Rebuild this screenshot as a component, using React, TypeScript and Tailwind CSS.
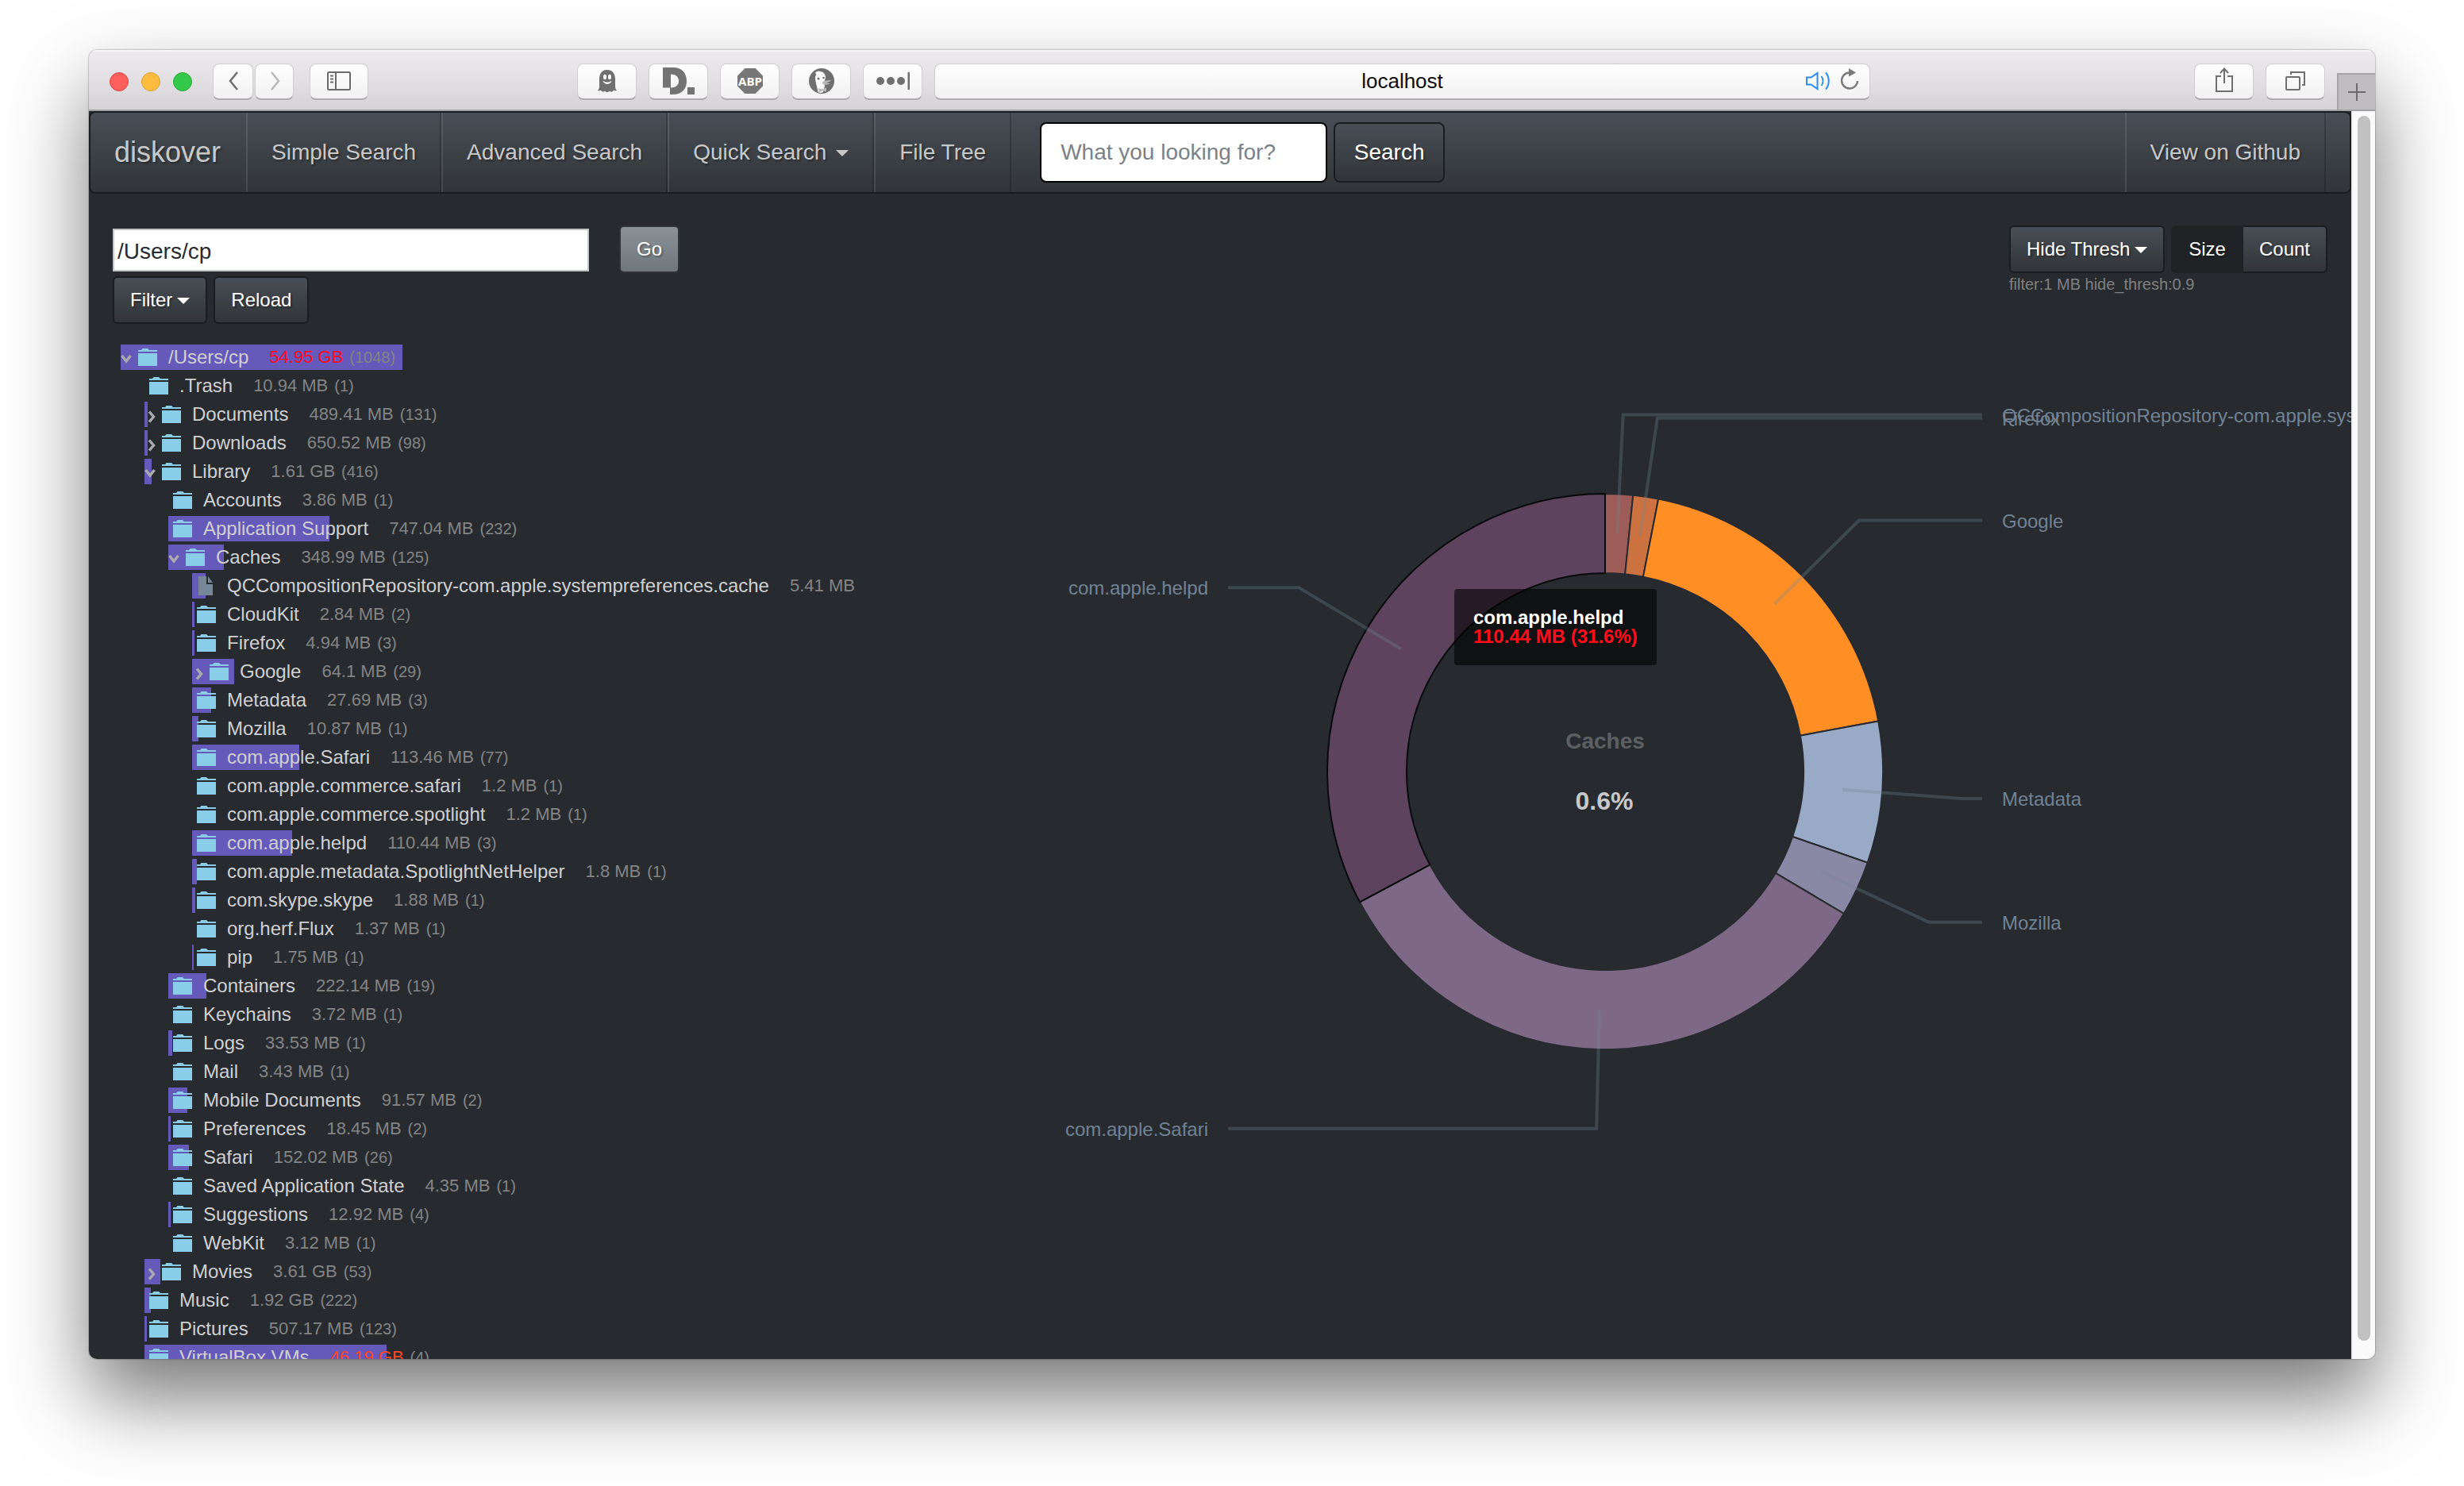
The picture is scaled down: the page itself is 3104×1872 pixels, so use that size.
import React from "react";

type Node = {
  name: string;
  size: string;
  count?: string;
  bar: number;
  tone?: "red" | "orange";
  file?: boolean;
  caret?: "open" | "closed";
  children?: Node[];
};

const tree: Node[] = [
  {
    name: "/Users/cp", size: "54.95 GB", count: "(1048)", bar: 355, tone: "red", caret: "open",
    children: [
      { name: ".Trash", size: "10.94 MB", count: "(1)", bar: 0 },
      { name: "Documents", size: "489.41 MB", count: "(131)", bar: 4, caret: "closed" },
      { name: "Downloads", size: "650.52 MB", count: "(98)", bar: 4, caret: "closed" },
      {
        name: "Library", size: "1.61 GB", count: "(416)", bar: 9, caret: "open",
        children: [
          { name: "Accounts", size: "3.86 MB", count: "(1)", bar: 0 },
          { name: "Application Support", size: "747.04 MB", count: "(232)", bar: 203 },
          {
            name: "Caches", size: "348.99 MB", count: "(125)", bar: 70, caret: "open",
            children: [
              { name: "QCCompositionRepository-com.apple.systempreferences.cache", size: "5.41 MB", bar: 17, file: true },
              { name: "CloudKit", size: "2.84 MB", count: "(2)", bar: 3 },
              { name: "Firefox", size: "4.94 MB", count: "(3)", bar: 3 },
              { name: "Google", size: "64.1 MB", count: "(29)", bar: 53, caret: "closed" },
              { name: "Metadata", size: "27.69 MB", count: "(3)", bar: 24 },
              { name: "Mozilla", size: "10.87 MB", count: "(1)", bar: 8 },
              { name: "com.apple.Safari", size: "113.46 MB", count: "(77)", bar: 135 },
              { name: "com.apple.commerce.safari", size: "1.2 MB", count: "(1)", bar: 0 },
              { name: "com.apple.commerce.spotlight", size: "1.2 MB", count: "(1)", bar: 0 },
              { name: "com.apple.helpd", size: "110.44 MB", count: "(3)", bar: 126 },
              { name: "com.apple.metadata.SpotlightNetHelper", size: "1.8 MB", count: "(1)", bar: 6 },
              { name: "com.skype.skype", size: "1.88 MB", count: "(1)", bar: 4 },
              { name: "org.herf.Flux", size: "1.37 MB", count: "(1)", bar: 0 },
              { name: "pip", size: "1.75 MB", count: "(1)", bar: 2 },
            ],
          },
          { name: "Containers", size: "222.14 MB", count: "(19)", bar: 48 },
          { name: "Keychains", size: "3.72 MB", count: "(1)", bar: 0 },
          { name: "Logs", size: "33.53 MB", count: "(1)", bar: 5 },
          { name: "Mail", size: "3.43 MB", count: "(1)", bar: 0 },
          { name: "Mobile Documents", size: "91.57 MB", count: "(2)", bar: 24 },
          { name: "Preferences", size: "18.45 MB", count: "(2)", bar: 3 },
          { name: "Safari", size: "152.02 MB", count: "(26)", bar: 26 },
          { name: "Saved Application State", size: "4.35 MB", count: "(1)", bar: 0 },
          { name: "Suggestions", size: "12.92 MB", count: "(4)", bar: 3 },
          { name: "WebKit", size: "3.12 MB", count: "(1)", bar: 0 },
        ],
      },
      { name: "Movies", size: "3.61 GB", count: "(53)", bar: 20, caret: "closed" },
      { name: "Music", size: "1.92 GB", count: "(222)", bar: 8 },
      { name: "Pictures", size: "507.17 MB", count: "(123)", bar: 3 },
      { name: "VirtualBox VMs", size: "46.19 GB", count: "(4)", bar: 305, tone: "orange" },
    ],
  },
];

function FolderIcon() {
  return (
    <svg className="h-[22px] w-6 shrink-0" viewBox="0 0 24 22" fill="#8acde9" aria-hidden="true">
      <path d="M4 2 5.500 0h6.500L14 2h10v2H0V2zM0 6h24v16H0z" />
    </svg>
  );
}

function FileIcon() {
  return (
    <svg className="ml-0.5 mr-1 h-6 w-[18px] shrink-0" viewBox="0 0 18 24" fill="#778899" aria-hidden="true">
      <path d="M0 0h10v10h8v14H0zM12 0l6 8h-6z" />
    </svg>
  );
}

function TreeCaret({ open }: { open: boolean }) {
  return (
    <svg className={open ? "mt-1 h-3 w-3.5" : "ml-1 mt-1.5 h-4 w-2.5"} viewBox={open ? "0 0 14 12" : "0 0 10 16"} fill="none" stroke="#ababab" strokeWidth="3.400" aria-hidden="true">
      <path d={open ? "M1.500 2 7 9l5.500-7" : "M2 1.500 7.500 8 2 14.500"} />
    </svg>
  );
}

function Tree({ nodes }: { nodes: Node[] }) {
  return (
    <ul>
      {nodes.map((n) => (
        <li key={n.name}>
          <div className="relative mb-1 flex h-8 items-center whitespace-nowrap">
            <span className="absolute inset-y-0 left-0 bg-[#6559b9]" style={{ width: n.bar }} />
            <div className="relative flex items-center">
              {n.caret ? (
                <button type="button" aria-label={(n.caret === "open" ? "Collapse " : "Expand ") + n.name} className="flex h-8 w-[22px] items-center">
                  <TreeCaret open={n.caret === "open"} />
                </button>
              ) : (
                <span className="w-1.5" />
              )}
              {n.file ? <FileIcon /> : <FolderIcon />}
              <span className="ml-3.5 text-2xl leading-8 text-[#d0d0d0]">{n.name}</span>
              <span className={"ml-[26px] text-[22px] leading-8 " + (n.tone === "red" ? "text-[#ff0a1e]" : n.tone === "orange" ? "text-[#ff4520]" : "text-[#848484]")}>
                {n.size}
              </span>
              {n.count && <span className="ml-2 text-[20px] leading-8 text-[#848484]">{n.count}</span>}
            </div>
          </div>
          {n.children && (
            <div className="ml-[30px]">
              <Tree nodes={n.children} />
            </div>
          )}
        </li>
      ))}
    </ul>
  );
}

const slices = [
  { label: "QCCompositionRepository-com.apple.systempreferences.cache", value: 5.41, color: "#9d5c57" },
  { label: "Firefox", value: 4.94, color: "#cc7240" },
  { label: "Google", value: 64.1, color: "#ff8e25" },
  { label: "Metadata", value: 27.69, color: "#98aac5" },
  { label: "Mozilla", value: 10.87, color: "#8a89a5" },
  { label: "com.apple.Safari", value: 113.46, color: "#7d6986" },
  { label: "com.apple.helpd", value: 110.44, color: "#5d435d" },
];

const point = (angle: number, r: number): [number, number] => [Math.sin(angle) * r, -Math.cos(angle) * r];

function arcs() {
  const total = slices.reduce((sum, s) => sum + s.value, 0);
  let start = 0;
  return slices.map((s) => {
    const end = start + (s.value / total) * Math.PI * 2;
    const mid = (start + end) / 2;
    const large = end - start > Math.PI ? 1 : 0;
    const d =
      "M" + point(start, 350) + "A350 350 0 " + large + " 1 " + point(end, 350) +
      "L" + point(end, 250) + "A250 250 0 " + large + " 0 " + point(start, 250) + "Z";
    start = end;
    const side = mid < Math.PI ? 1 : -1;
    const elbow = point(mid, 450);
    return { ...s, d, side, y: elbow[1], line: [point(mid, 300), elbow, [475 * side, elbow[1]]].join(" ") };
  });
}

function Donut() {
  const parts = arcs();
  return (
    <svg className="block w-full" viewBox="-940 -572 1880 1144" role="img" aria-label="Size by folder in Caches">
      {parts.map((p, i) => (
        <path key={p.label} d={p.d} fill={p.color} stroke={i === parts.length - 1 ? "#08090a" : "#272b30"} strokeWidth="2" />
      ))}
      {parts.map((p) => (
        <polyline key={p.label} points={p.line} fill="none" stroke="#6f8896" strokeOpacity="0.3" strokeWidth="4" />
      ))}
      {parts.map((p) => (
        <text key={p.label} x={500 * p.side} y={p.y + 9} textAnchor={p.side > 0 ? "start" : "end"} fontSize="24" fill="#728293">
          {p.label}
        </text>
      ))}
      <text x="0" y="-29" textAnchor="middle" fontSize="28" fontWeight="700" fill="#5d6062">Caches</text>
      <text x="-1" y="48" textAnchor="middle" fontSize="32" fontWeight="700" fill="#c8c8c8">0.6%</text>
    </svg>
  );
}

function Caret() {
  return (
    <svg className="mt-0.5 h-2 w-4" viewBox="0 0 16 8" fill="currentColor" aria-hidden="true">
      <path d="M0 0h16L8 8z" />
    </svg>
  );
}

const dark = "bg-[linear-gradient(#484e55,#3a3f44_60%,#313539)]";
const shade = "[text-shadow:2px_2px_2px_rgba(0,0,0,0.3)]";
const btn = "flex h-[60px] items-center gap-1.5 border-2 border-[#1a1d20] px-5 text-2xl text-white " + shade + " " + dark;
const chip = "flex h-[46px] items-center justify-center rounded-[8px] border border-[#cfcdcf] border-b-2 border-b-[#adabad] bg-[linear-gradient(#ffffff,#f1f1f1)]";
const navLink = "flex h-full items-center gap-3 border-l-2 border-r-2 border-l-white/10 border-r-black/20 px-[30px]";

function Toolbar() {
  return (
    <header className="flex h-[77px] shrink-0 items-center border-b-2 border-[#a09fa1] bg-[linear-gradient(#edebed,#e7e5e8_30%,#d5d3d6)] pl-[26px] pt-1 shadow-[inset_0_2px_0_#f7f6f7]">
      <div className="flex gap-4">
        <button type="button" aria-label="Close" className="size-6 rounded-full border border-[#e2463f] bg-[#fc605c]" />
        <button type="button" aria-label="Minimize" className="size-6 rounded-full border border-[#e0a030] bg-[#fdbc40]" />
        <button type="button" aria-label="Zoom" className="size-6 rounded-full border border-[#2aab37] bg-[#34c84a]" />
      </div>
      <div className="ml-[26px] flex gap-0.5">
        <button type="button" aria-label="Back" className={chip + " w-[51px]"}>
          <svg className="h-6 w-4" viewBox="0 0 16 24" fill="none" stroke="#6f6f6f" strokeWidth="2.500"><path d="M13 1 4 12l9 11" /></svg>
        </button>
        <button type="button" aria-label="Forward" className={chip + " w-[49px]"}>
          <svg className="h-6 w-4" viewBox="0 0 16 24" fill="none" stroke="#b8b8b8" strokeWidth="2.500"><path d="m4 1 9 11-9 11" /></svg>
        </button>
      </div>
      <button type="button" aria-label="Show sidebar" className={chip + " ml-5 w-[74px]"}>
        <svg className="h-6 w-[30px]" viewBox="0 0 30 24" fill="none" stroke="#6b6b6b" strokeWidth="2">
          <rect x="1" y="1" width="28" height="22" rx="1.500" />
          <path d="M11 1v22M4 5.500h4M4 9.500h4M4 13.500h4" />
        </svg>
      </button>
      <div className="ml-[263px] flex gap-[15px]">
        <button type="button" aria-label="Ghostery" className={chip + " w-[75px]"}>
          <svg className="h-7 w-6" viewBox="0 0 24 28">
            <path fill="#6f6f6f" d="M2 12C2 4 6 0 12 0s10 4 10 12v9c0 2 .8 3.600 2 5-1.500.6-3 .4-4-.6-1 2.300-3.200 3-5 1-1.600 2-4.400 2-6 0-1.800 2-4 1.300-5-1-1 1-2.500 1.200-4 .6 1.200-1.400 2-3 2-5z" />
            <ellipse cx="9" cy="9" rx="2" ry="3.200" fill="#fbfbfb" /><ellipse cx="15" cy="9" rx="2" ry="3.200" fill="#fbfbfb" />
            <path d="M7 14.500c2.500 4 7.500 4 10 0-3 2-7 2-10 0z" fill="#fbfbfb" stroke="#fbfbfb" />
          </svg>
        </button>
        <button type="button" aria-label="Disconnect" className={chip + " w-[75px]"}>
          <svg className="h-[34px] w-10" viewBox="0 0 40 34" fill="#737373">
            <path fillRule="evenodd" d="M0 0h13c11 0 17 7 17 17s-6 17-17 17H9v-8.500H0zM10 8.500v17c6 0 10-3 10-8.500s-4-8.500-10-8.500z" />
            <path d="M31 25h9v9h-9z" />
          </svg>
        </button>
        <button type="button" aria-label="Adblock Plus" className={chip + " w-[75px]"}>
          <svg className="size-8" viewBox="0 0 32 32">
            <path fill="#777777" d="M9.400 0h13.200L32 9.400v13.200L22.600 32H9.400L0 22.600V9.400z" />
            <text x="16" y="21.500" textAnchor="middle" fontSize="15" fontWeight="700" fill="#ffffff" fontFamily="Open Sans, sans-serif">ABP</text>
          </svg>
        </button>
        <button type="button" aria-label="DuckDuckGo" className={chip + " w-[75px]"}>
          <svg className="size-8" viewBox="0 0 32 32">
            <circle cx="16" cy="16" r="16" fill="#6f6f6f" />
            <path fill="#fbfbfb" d="M8 6c1-2 4-3 6-2 4 0 7 3 7 8l-2 6 1 4-2 8c-2 1.300-5 1-6.500 0C10.500 24 8 17 8 12c0-2 .5-3 1.500-4z" />
            <circle cx="12" cy="13" r="1.500" fill="#6f6f6f" /><circle cx="18.500" cy="12" r="1.300" fill="#6f6f6f" />
            <path fill="#b9b9b9" d="M17 17c3-1.500 7-2 11-1.500-2 2-5 2.500-7 2.500 2 1 4 1.200 6 .8-3 2.400-7 2.600-9.500 1.200zM12 25l4 1.500 6-2v5l-5-1-4.500 1.500z" />
          </svg>
        </button>
        <button type="button" aria-label="Passwords" className={chip + " w-[75px]"}>
          <svg className="h-[22px] w-[42px]" viewBox="0 0 42 22" fill="#6f6f6f">
            <circle cx="5" cy="11" r="5" /><circle cx="18" cy="11" r="5" /><circle cx="31" cy="11" r="5" /><path d="M39.500 0H42v22h-2.500z" />
          </svg>
        </button>
      </div>
      <div className={chip + " ml-[15px] flex-1"}>
        <input aria-label="Address" defaultValue="localhost" className="ml-[80px] h-10 min-w-0 flex-1 bg-transparent text-center text-[26px] text-[#0a0a0a] outline-none" />
        <div className="flex w-[80px] items-center gap-3">
          <svg className="h-6 w-[31px]" viewBox="0 0 31 24" fill="none" stroke="#2a8cf5" strokeWidth="2">
            <path d="M1 7.500h5.500L14.500 2v20L6.500 16.500H1zM19.500 6c2.500 3.500 2.500 8.500 0 12M25 1.500c5 6 5 15 0 21" />
          </svg>
          <svg className="-mt-1 h-7 w-6" viewBox="0 0 24 28">
            <path d="M12 5.500A10 10 0 1 0 22 16" fill="none" stroke="#7a7a7a" strokeWidth="2.400" />
            <path d="M11 0l9 5.500-9 5z" fill="#7a7a7a" />
          </svg>
        </div>
      </div>
      <div className="ml-[408px] flex gap-[15px]">
        <button type="button" aria-label="Share" className={chip + " w-[75px]"}>
          <svg className="-mt-1 h-[31px] w-[22px]" viewBox="0 0 22 31" fill="none" stroke="#6f6f6f" strokeWidth="2">
            <path d="M7 11H1v19h20V11h-6M11 20V1.500M6 7l5-5.500L16 7" />
          </svg>
        </button>
        <button type="button" aria-label="Show all tabs" className={chip + " w-[75px]"}>
          <svg className="h-6 w-[25px]" viewBox="0 0 25 24" fill="none" stroke="#6f6f6f" strokeWidth="2">
            <rect x="1" y="7" width="17" height="16" rx="1" /><path d="M7 4V1h17v16h-3" />
          </svg>
        </button>
      </div>
      <button type="button" aria-label="New tab" className="ml-[15px] flex h-[46px] w-12 items-center justify-center self-end border-l-2 border-t-2 border-[#a5a3a6] bg-[#bfbdc0]">
        <svg className="size-[22px]" viewBox="0 0 22 22" stroke="#6a6a6a" strokeWidth="2"><path d="M11 0v22M0 11h22" /></svg>
      </button>
    </header>
  );
}

function Navbar() {
  return (
    <nav className={"flex h-[104px] shrink-0 items-center rounded-[8px] border-2 border-[#1a1d20] text-[28px] text-[#c8c8c8] " + shade + " " + dark}>
      <a href="#home" className="w-[196px] pl-[30px] text-4xl">diskover</a>
      <a href="#simple" className={navLink}>Simple Search</a>
      <a href="#advanced" className={navLink}>Advanced Search</a>
      <a href="#quick" className={navLink}>Quick Search <Caret /></a>
      <a href="#tree" className={navLink}>File Tree</a>
      <form className="ml-9 flex gap-2" onSubmit={(e) => e.preventDefault()}>
        <input aria-label="Search" placeholder="What you looking for?" className="h-[76px] w-[362px] rounded-[8px] border-2 border-black bg-white px-6 text-[28px] text-[#272b30] outline-none placeholder:text-[#7a8288]" />
        <button type="submit" className={"h-[76px] w-[140px] rounded-[8px] border-2 border-[#1a1d20] text-[28px] text-white " + shade + " " + dark}>Search</button>
      </form>
      <a href="#github" className={navLink + " ml-auto mr-[30px]"}>View on Github</a>
    </nav>
  );
}

export default function App() {
  return (
    <div className="flex h-screen flex-col bg-white px-28 pb-40 pt-[63px] font-['Liberation_Sans',Arial,sans-serif]">
      <div className="flex min-h-0 flex-1 flex-col overflow-hidden rounded-[10px] shadow-[0_0_2px_rgba(0,0,0,0.6),0_50px_100px_rgba(0,0,0,0.53)]">
        <Toolbar />
        <div className="flex min-h-0 flex-1">
          <div className="flex min-w-0 flex-1 flex-col overflow-hidden bg-[#272b30]">
            <Navbar />
            <main className="flex min-h-0 flex-1">
              <section className="w-[970px] shrink-0 pl-[30px] pt-10">
                <form className="flex items-center gap-[38px]" onSubmit={(e) => e.preventDefault()}>
                  <input aria-label="Path" defaultValue="/Users/cp" className="mt-0.5 h-[54px] w-[600px] border-2 border-[#c4c4c4] bg-white px-1 pt-1 text-[28px] text-[#272b30] outline-none" />
                  <button type="submit" className={"h-[60px] w-[76px] rounded-[6px] border-2 border-[#303438] bg-[linear-gradient(#8a9196,#7a8288_60%,#6f777c)] text-2xl text-white " + shade}>Go</button>
                </form>
                <div className="mt-1 flex gap-2">
                  <button type="button" className={btn + " rounded-[6px]"}>Filter <Caret /></button>
                  <button type="button" className={btn + " rounded-[6px]"}>Reload</button>
                </div>
                <div className="ml-2.5 mt-[26px]">
                  <Tree nodes={tree} />
                </div>
              </section>
              <section className="min-w-0 flex-1 pt-10">
                <div className="mr-[30px] flex flex-col items-end">
                  <div>
                    <div className="flex gap-2">
                      <button type="button" className={btn + " rounded-[6px]"}>Hide Thresh <Caret /></button>
                      <div className="flex">
                        <button type="button" aria-pressed="true" className={"h-[60px] rounded-l-[6px] border-2 border-[#1f2225] bg-[#202326] px-5 text-2xl text-white " + shade}>Size</button>
                        <button type="button" className={btn + " rounded-r-[6px] border-l-0"}>Count</button>
                      </div>
                    </div>
                    <p className="text-[20px] leading-7 text-[#808080]">filter:1 MB hide_thresh:0.9</p>
                  </div>
                </div>
                <div className="relative mt-7">
                  <Donut />
                  <div className="absolute left-[calc(50%-190px)] top-[342px] h-24 whitespace-nowrap rounded-[4px] bg-black/60 p-6 text-2xl font-bold leading-6">
                    <p className="text-white">com.apple.helpd</p>
                    <p className="text-[#ff0d1c]">110.44 MB (31.6%)</p>
                  </div>
                </div>
              </section>
            </main>
          </div>
          <div className="flex w-[30px] border-l-2 border-[#ececec] bg-[#fafafa] pb-[23px] pl-1.5 pt-1.5">
            <div className="w-4 rounded-full bg-[#c1c1c1]" />
          </div>
        </div>
      </div>
    </div>
  );
}
